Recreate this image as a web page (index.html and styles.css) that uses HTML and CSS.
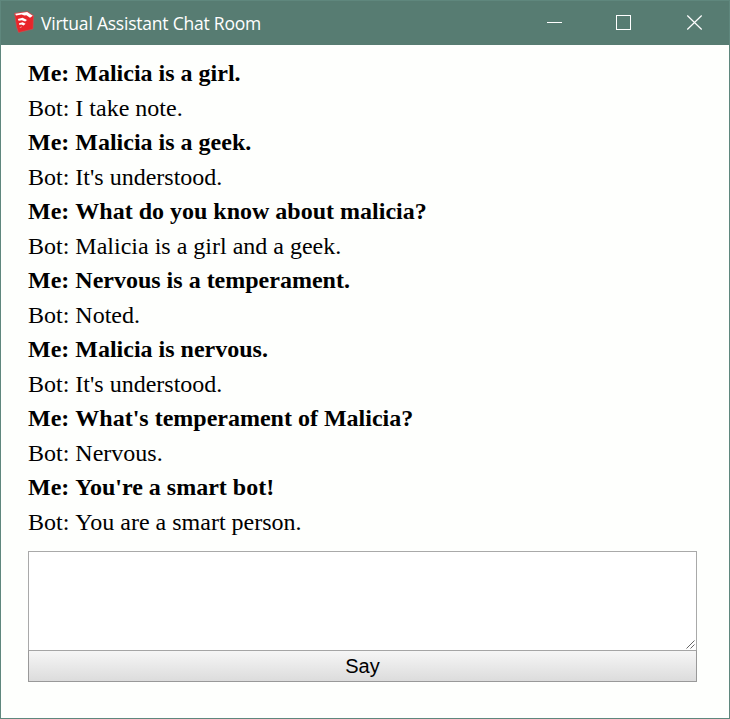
FILE: index.html
```html
<!DOCTYPE html>
<html lang="en">
<head>
<meta charset="utf-8">
<title>Virtual Assistant Chat Room</title>
<link rel="stylesheet" href="styles.css">
</head>
<body>
<div class="window">
  <header class="titlebar">
    <svg class="app-icon" width="20" height="22" viewBox="0 0 20 22">
      <path d="M.5 2.2L13.5 .6L19.5 4.5L19 18L4.5 21.5L2.6 16Z" fill="#e8252a" stroke="#c9595a" stroke-width=".5"/>
      <path d="M1.2 2.8L13.2 1L18.8 4.8L16 6.8L12.4 4.2L10.4 4.6L7.6 3.6L2 4.4Z" fill="#fff"/>
      <path d="M3.8 7.9L8.6 6.8L13 9L11.2 10.6L7.8 9.2L4.6 9.8Z" fill="#fff"/>
      <path d="M5 12.2L8.6 11.2L11.6 12.8L9.6 14.6L7.2 13.6L5.4 13.9Z" fill="#fff"/>
      <path d="M5.4 16.2L8.2 15.4L7 16.6Z" fill="#fff"/>
    </svg>
    <h1 class="title">Virtual Assistant Chat Room</h1>
    <svg class="controls" width="158" height="16" viewBox="0 0 158 16" fill="none" stroke="#fff">
      <path d="M0 7.5H15"/>
      <rect x="69.5" y=".5" width="14" height="14"/>
      <path d="M140.3 .5L154.7 14.5M154.7 .5L140.3 14.5" stroke-width="1.2"/>
    </svg>
  </header>
  <main class="room">
    <div class="log">
      <p class="me"><span class="who">Me: </span>Malicia is a girl.</p>
      <p><span class="who">Bot: </span>I take note.</p>
      <p class="me"><span class="who">Me: </span>Malicia is a geek.</p>
      <p><span class="who">Bot: </span>It's understood.</p>
      <p class="me"><span class="who">Me: </span>What do you know about malicia?</p>
      <p><span class="who">Bot: </span>Malicia is a girl and a geek.</p>
      <p class="me"><span class="who">Me: </span>Nervous is a temperament.</p>
      <p><span class="who">Bot: </span>Noted.</p>
      <p class="me"><span class="who">Me: </span>Malicia is nervous.</p>
      <p><span class="who">Bot: </span>It's understood.</p>
      <p class="me"><span class="who">Me: </span>What's temperament of Malicia?</p>
      <p><span class="who">Bot: </span>Nervous.</p>
      <p class="me"><span class="who">Me: </span>You're a smart bot!</p>
      <p><span class="who">Bot: </span>You are a smart person.</p>
    </div>
    <div class="composer">
      <div class="field">
        <textarea class="message"></textarea>
        <svg class="grip" width="9" height="9" viewBox="0 0 9 9" fill="none" stroke="#555" stroke-width=".9">
          <path d="M.5 8.5L8.5 .5M4.5 8.5L8.5 4.5"/>
        </svg>
      </div>
      <button class="say">Say</button>
    </div>
  </main>
</div>
</body>
</html>
```

FILE: styles.css
```css
* { box-sizing: border-box; }
body { margin: 0; }
.window {
  height: 719px;
  border: 1px solid #5f877d;
  background: #fefffd;
}
.titlebar {
  display: flex;
  align-items: flex-start;
  height: 44px;
  padding-left: 13px;
  background: #577c72;
  color: #fff;
}
.app-icon { margin-top: 10px; }
.title {
  margin: 9px 0 0 7px;
  font: 400 17.5px/27px "Open Sans", sans-serif;
  letter-spacing: -.22px;
  white-space: nowrap;
}
.controls { margin: 14px 24px 0 auto; }
.room { padding: 11px 32px 0 27px; }
.log {
  color: #000;
  font: 24px/34.5px "Liberation Serif", serif;
}
.log p { margin: 0; }
.log .me { font-weight: 700; }
.who { display: inline-block; white-space: pre; }
.composer { margin-top: 12px; }
.field { position: relative; height: 99px; }
.message {
  display: block;
  width: 100%;
  height: 100%;
  margin: 0;
  border: 1px solid #a9a9a9;
  border-bottom: 0;
  background: #fff;
  outline: 0;
  resize: none;
}
.grip { position: absolute; right: 2px; bottom: 1px; }
.say {
  display: block;
  width: 100%;
  height: 32px;
  padding: 0;
  border: 1px solid #999;
  border-top-color: #a5a5a5;
  border-radius: 0;
  background: linear-gradient(#f6f6f6, #dcdcdc);
  color: #000;
  font: 20px/28px "Liberation Sans", sans-serif;
}
```
